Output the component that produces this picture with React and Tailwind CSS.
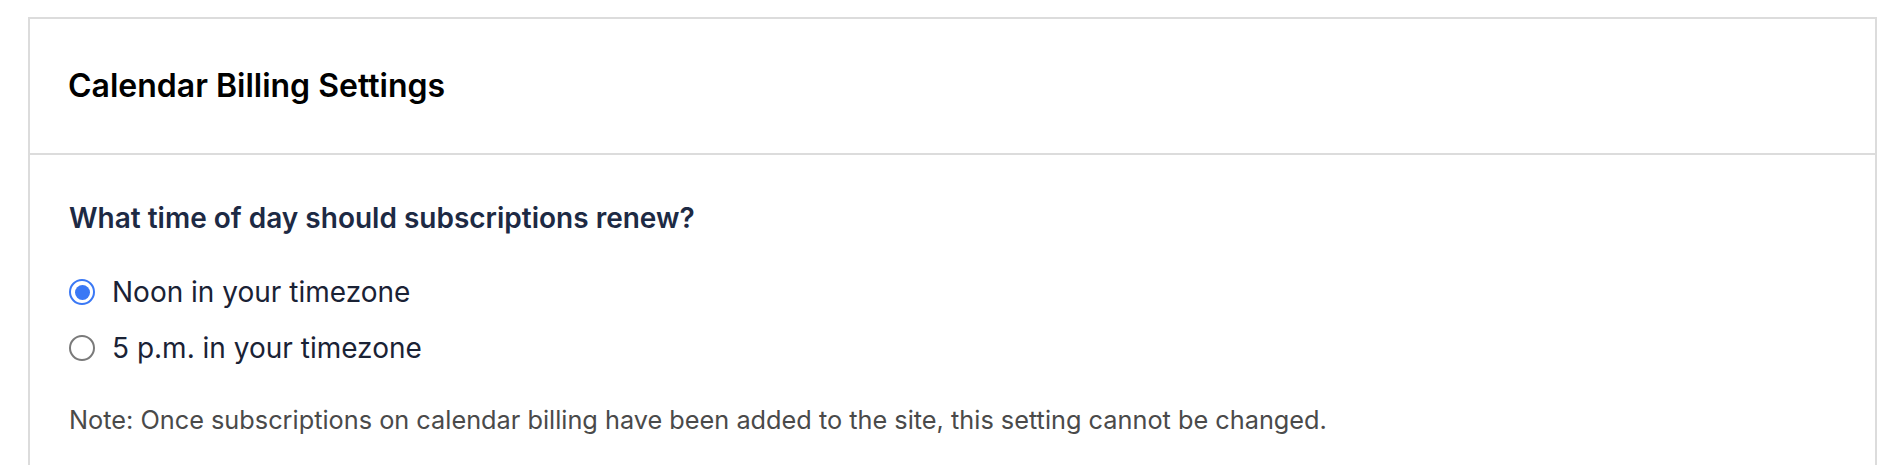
import React, { useState } from 'react';

const options = [
    { id: 'noon', label: 'Noon in your timezone' },
    { id: 'five', label: '5 p.m. in your timezone' },
];

function Radio({ checked }) {
    if (checked) {
        return (
            <span className="flex h-[26px] w-[26px] shrink-0 items-center justify-center rounded-full border-2 border-[#3a78f5] bg-white">
                <span className="h-[15px] w-[15px] rounded-full bg-[#3a78f5]" />
            </span>
        );
    }
    return <span className="h-[26px] w-[26px] shrink-0 rounded-full border-2 border-[#7a7a7a] bg-white" />;
}

export default function App() {
    const [renewAt, setRenewAt] = useState('noon');

    return (
        <div className="min-h-screen bg-white pl-[28px] pr-[26px] pt-[17px]" style={{ fontFamily: 'Inter, "Noto Sans", sans-serif' }}>
            <div className="border-2 border-[#dcdcdc]">
                <div className="flex h-[136px] items-center border-b-2 border-[#dcdcdc] pl-[38px]">
                    <h2 className="text-[32px] font-semibold leading-none text-black">Calendar Billing Settings</h2>
                </div>
                <div className="pb-[60px] pl-[39px] pt-[49px]">
                    <h3 className="text-[28px] font-semibold leading-none text-[#1d2a44]">What time of day should subscriptions renew?</h3>
                    <div className="mt-[46px] flex flex-col gap-[28px]">
                        {options.map((opt) => (
                            <label key={opt.id} className="flex cursor-pointer items-center gap-[17px]" onClick={() => setRenewAt(opt.id)}>
                                <Radio checked={renewAt === opt.id} />
                                <span className="text-[28px] leading-none text-[#1a2235]">{opt.label}</span>
                            </label>
                        ))}
                    </div>
                    <p className="mt-[45px] text-[25.3px] leading-none text-[#4a4a4a]">
                        Note: Once subscriptions on calendar billing have been added to the site, this setting cannot be changed.
                    </p>
                </div>
            </div>
        </div>
    );
}
